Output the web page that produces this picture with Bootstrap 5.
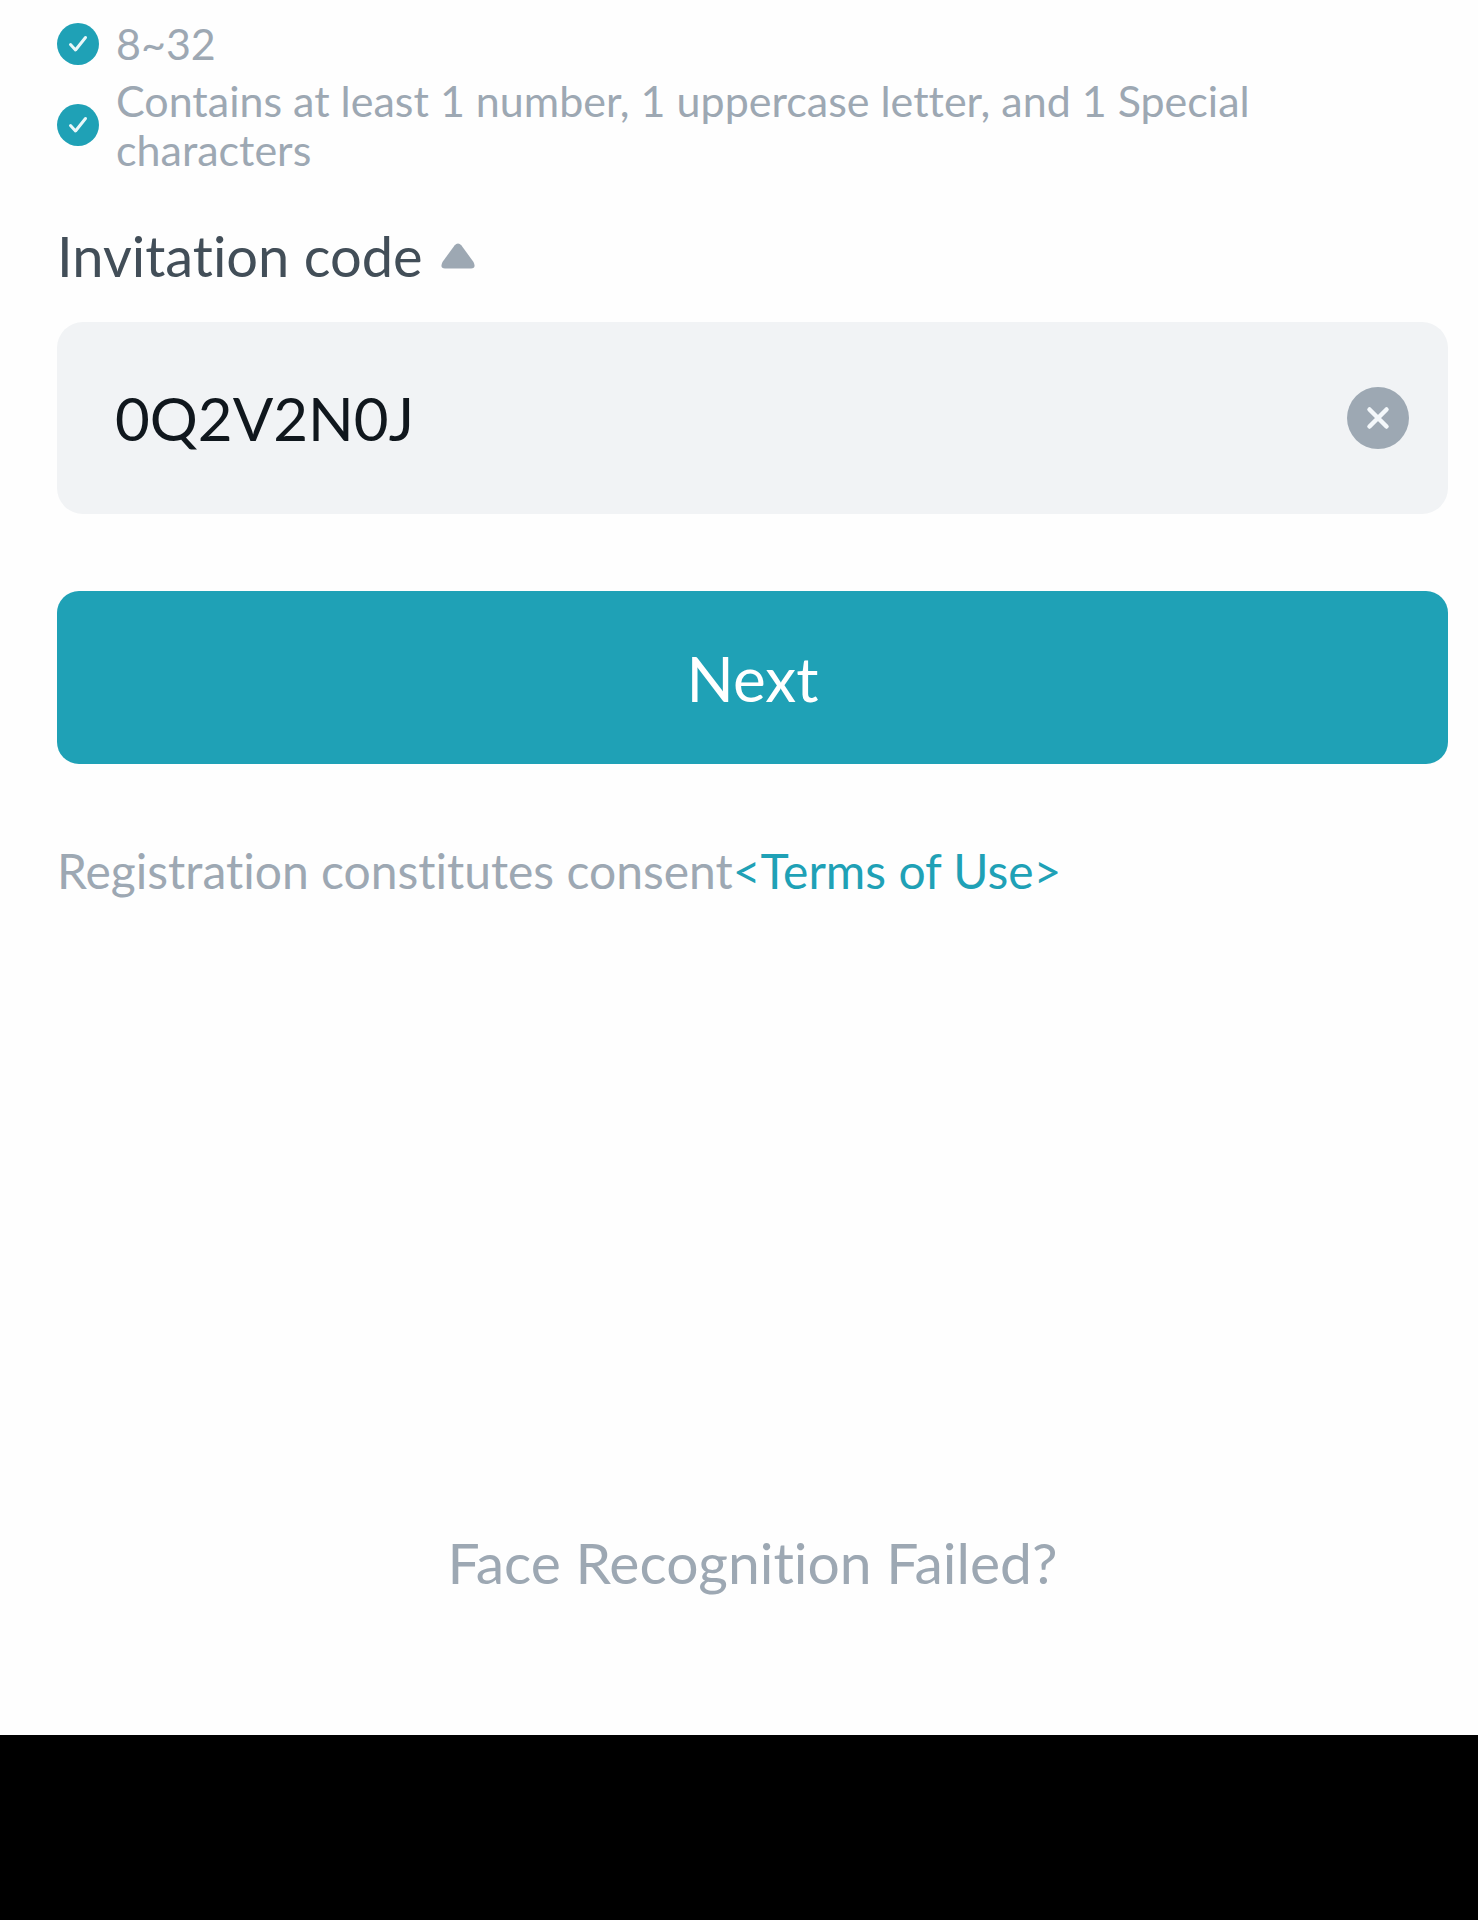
<!DOCTYPE html>
<html lang="en">
<head>
<meta charset="utf-8">
<meta name="viewport" content="width=device-width, initial-scale=1">
<title>Register</title>
<link rel="stylesheet" href="https://cdn.jsdelivr.net/npm/bootstrap@5.3.0/dist/css/bootstrap.min.css">
<style>
  :root { --teal: #1fa1b6; --muted: #9da8b3; --ink: #424e58; }
  body { font-family: Lato, "Liberation Sans", sans-serif; font-variant-ligatures: none; color: var(--muted); background: #fefefe; }
  .signup { padding: 19px 30px 140px 57px; }
  .rules { font-size: 43px; line-height: 49px; gap: 8px; }
  .rules li { gap: 17px; }
  .rules svg { width: 42px; height: 42px; }
  .rule-text { max-width: 1200px; }
  .code-toggle { font-size: 56px; line-height: 66px; color: var(--ink); gap: 18px; margin: 49px 0 33px; }
  .code-toggle svg { width: 34px; height: 26px; }
  .code-field { background: #f1f3f5; border-radius: 26px; height: 192px; padding: 0 39px 0 58px; }
  .code-field input, .code-field input:focus { font-size: 60px; line-height: 74px; color: #10171d; background: transparent; box-shadow: none; }
  .code-field svg { width: 62px; height: 62px; }
  .btn-next { --bs-btn-color: #fff; --bs-btn-bg: var(--teal); --bs-btn-hover-color: #fff; --bs-btn-hover-bg: #1990a3; --bs-btn-active-bg: #1990a3; --bs-btn-active-color: #fff;
    font-size: 62px; line-height: 74px; height: 173px; border-radius: 22px; margin: 77px 0 79px; }
  .terms { font-size: 48px; line-height: 56px; }
  .terms a { color: var(--teal); }
  .face-link { font-size: 57px; line-height: 66px; color: var(--muted); }
  .system-bar { height: 185px; }
</style>
</head>
<body>
<div class="d-flex flex-column min-vh-100">
  <main class="signup d-flex flex-column flex-grow-1">
    <ul class="rules list-unstyled d-flex flex-column mb-0">
      <li class="d-flex align-items-center">
        <svg class="flex-shrink-0" viewBox="0 0 42 42" aria-hidden="true"><circle cx="21" cy="21" r="21" fill="#1fa1b6"/><path d="M13.500 21.500l5 5.500L28.500 14.500" fill="none" stroke="#e9f7f9" stroke-width="3" stroke-linecap="round" stroke-linejoin="round"/></svg>
        <span class="rule-text">8~32</span>
      </li>
      <li class="d-flex align-items-center">
        <svg class="flex-shrink-0" viewBox="0 0 42 42" aria-hidden="true"><circle cx="21" cy="21" r="21" fill="#1fa1b6"/><path d="M13.500 21.500l5 5.500L28.500 14.500" fill="none" stroke="#e9f7f9" stroke-width="3" stroke-linecap="round" stroke-linejoin="round"/></svg>
        <span class="rule-text">Contains at least 1 number, 1 uppercase letter, and 1 Special characters</span>
      </li>
    </ul>

    <form class="d-flex flex-column">
      <label class="code-toggle d-flex align-items-center" for="invite">Invitation code
        <svg viewBox="0 0 34 26" aria-hidden="true"><path d="M13.500 2.500Q17-1.500 20.500 2.500L32.500 19Q35.500 25.500 30 25.500H4Q-1.500 25.500 1.500 19Z" fill="#9da8b3"/></svg>
      </label>
      <div class="code-field d-flex align-items-center">
        <input id="invite" class="form-control border-0 p-0" type="text" value="0Q2V2N0J">
        <button class="btn border-0 p-0 d-flex flex-shrink-0" type="button" aria-label="Clear">
          <svg viewBox="0 0 62 62" aria-hidden="true"><circle cx="31" cy="31" r="31" fill="#9da8b3"/><path d="M22.500 22.500l17 17M39.500 22.500l-17 17" stroke="#f4f8fb" stroke-width="4.500" stroke-linecap="round"/></svg>
        </button>
      </div>
      <button class="btn btn-next border-0 w-100" type="submit">Next</button>
    </form>

    <p class="terms mb-0">Registration constitutes consent<a class="text-decoration-none" href="#terms">&lt;Terms of Use&gt;</a></p>
    <a class="face-link text-decoration-none mt-auto align-self-center" href="#face">Face Recognition Failed?</a>
  </main>
  <footer class="system-bar bg-black"></footer>
</div>
<script src="https://cdn.jsdelivr.net/npm/bootstrap@5.3.0/dist/js/bootstrap.bundle.min.js"></script>
</body>
</html>
